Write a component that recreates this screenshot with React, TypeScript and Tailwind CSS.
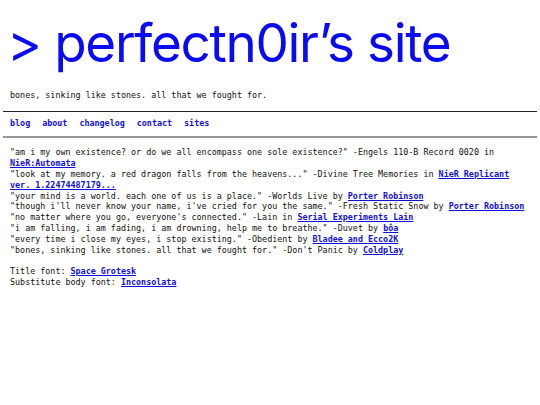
import React from "react";

function A({ children }: { children: React.ReactNode }) {
  return <a className="font-bold text-[#1010d8] underline">{children}</a>;
}

export default function App() {
  return (
    <div className="w-[540px] h-[405px] bg-white px-[3px] text-[#111]">
      <h1
        className="pl-[4px] pt-[13px] text-[53px] leading-[60px] text-[#0a0af5] tracking-[-1.35px]"
        style={{ fontFamily: "Inter, sans-serif" }}
      >
        &gt; perfectn0ir’s site
      </h1>
      <div className="font-['DejaVu_Sans_Mono',monospace] text-[8.4px] leading-[10.8px]">
        <p className="pl-[7px] mt-[17px]">bones, sinking like stones. all that we fought for.</p>
        <div className="mt-[10px] border-t border-[#222]" />
        <nav className="pl-[7px] flex gap-[12px] py-[6.6px] font-bold text-[#1010d8]">
          <a>blog</a>
          <a>about</a>
          <a>changelog</a>
          <a>contact</a>
          <a>sites</a>
        </nav>
        <div className="border-t-2 border-[#999]" />
        <div className="pl-[7px] pr-[5px] pt-[9.6px]">
          <p>"am i my own existence? or do we all encompass one sole existence?" -Engels 110-B Record 0020 in <A>NieR:Automata</A></p>
          <p>"look at my memory. a red dragon falls from the heavens..." -Divine Tree Memories in <A>NieR Replicant ver. 1.22474487179...</A></p>
          <p>"your mind is a world. each one of us is a place." -Worlds Live by <A>Porter Robinson</A></p>
          <p>"though i'll never know your name, i've cried for you the same." -Fresh Static Snow by <A>Porter Robinson</A></p>
          <p>"no matter where you go, everyone's connected." -Lain in <A>Serial Experiments Lain</A></p>
          <p>"i am falling, i am fading, i am drowning, help me to breathe." -Duvet by <A>bôa</A></p>
          <p>"every time i close my eyes, i stop existing." -Obedient by <A>Bladee and Ecco2K</A></p>
          <p>"bones, sinking like stones. all that we fought for." -Don't Panic by <A>Coldplay</A></p>
          <p className="mt-[10.8px]">Title font: <A>Space Grotesk</A></p>
          <p>Substitute body font: <A>Inconsolata</A></p>
        </div>
      </div>
    </div>
  );
}
